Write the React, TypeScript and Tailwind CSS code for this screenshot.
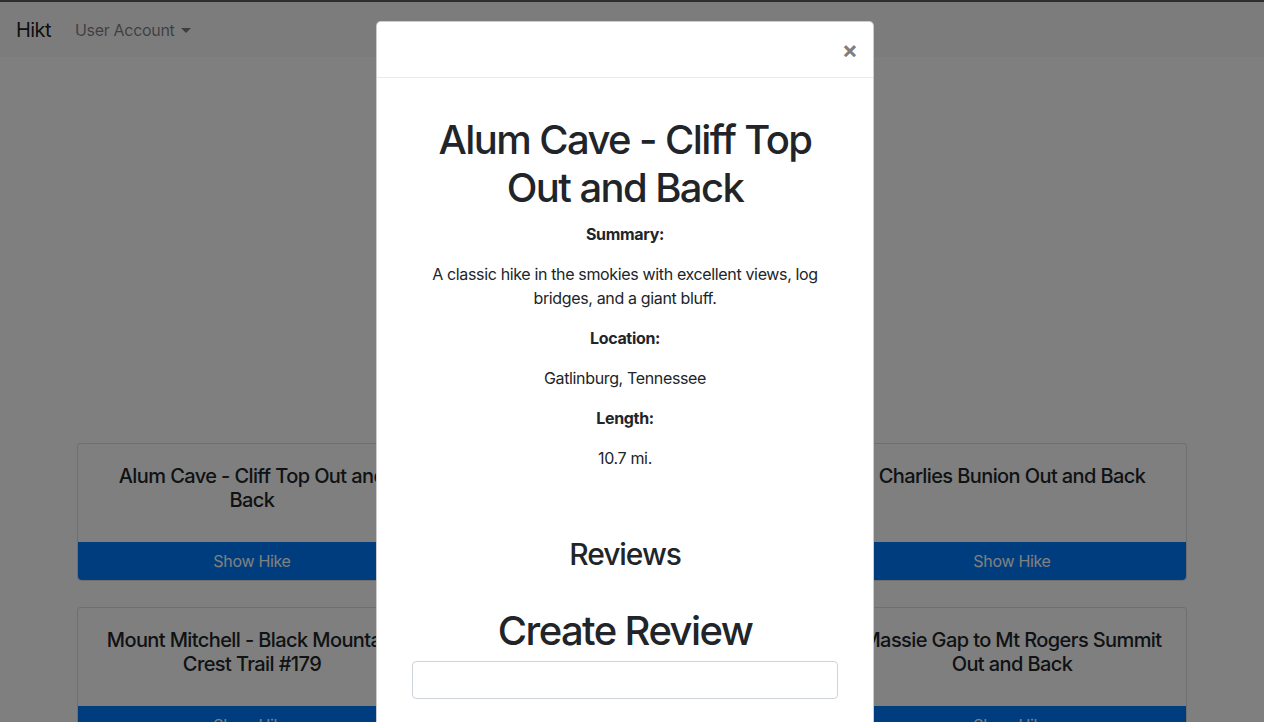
const hikes = [
  { id: 1, name: 'Alum Cave - Cliff Top Out and Back' },
  { id: 2, name: 'Rainbow Falls Trail' },
  { id: 3, name: 'Charlies Bunion Out and Back' },
  { id: 4, name: 'Mount Mitchell - Black Mountain Crest Trail #179' },
  { id: 5, name: 'Max Patch Loop' },
  { id: 6, name: 'Massie Gap to Mt Rogers Summit Out and Back' },
]

function HikeCard({ name }: { name: string }) {
  return (
    <div className="flex h-full flex-col rounded-[4px] border border-black/[0.125] bg-white">
      <div className="flex-1 px-5 pt-5 pb-[18px]">
        <h5 className="mb-3 text-center text-[20px] leading-[24px] font-medium tracking-[-0.03em] text-[#212529]">{name}</h5>
      </div>
      <button className="h-[38px] w-full rounded-b-[4px] bg-[#007bff] text-[16px] tracking-[-0.02em] text-white">Show Hike</button>
    </div>
  )
}

export default function App() {
  return (
    <div
      className="relative h-[722px] w-[1264px] overflow-hidden bg-white text-[#212529]"
      style={{ fontFamily: 'Inter, "Noto Sans", sans-serif' }}
    >
      {/* Navbar */}
      <nav className="flex h-[57px] items-center bg-[#f8f9fa] px-4 pt-[3px]">
        <span className="w-[59px] text-[20px] tracking-[-0.03em] text-black/90">Hikt</span>
        <span className="flex items-center text-[16px] tracking-[-0.02em] text-black/50">
          User Account
          <span className="ml-[7px] h-0 w-0 border-x-[5px] border-t-[5px] border-x-transparent border-t-black/50" />
        </span>
      </nav>

      {/* Page content */}
      <div className="mx-auto w-[1140px] px-[15px] pt-[386px]">
        <div className="grid grid-cols-3 gap-x-[30px] gap-y-[26px]">
          {hikes.map((h) => (
            <HikeCard key={h.id} name={h.name} />
          ))}
        </div>
      </div>

      {/* Backdrop */}
      <div className="absolute inset-0 bg-black/50" />
      <div className="absolute inset-x-0 top-0 h-[2px] bg-[#2e2e2e]" />

      {/* Modal */}
      <div className="absolute top-[21px] left-[376px] w-[498px] rounded-[5px] border border-black/20 bg-white">
        <div className="flex h-[56px] items-center justify-end border-b border-[#e9ecef] px-4">
          <span className="mr-[-1px] text-[24px] leading-none font-bold text-black/50">×</span>
        </div>
        <div className="px-[35px] pt-[38px] text-center">
          <h1 className="mb-[10px] text-[40px] leading-[48px] font-medium tracking-[-0.04em]">Alum Cave - Cliff Top Out and Back</h1>
          <p className="mb-4 text-[16px] leading-[24px] font-bold tracking-[-0.02em]">Summary:</p>
          <p className="mb-4 px-[10px] text-[16px] leading-[24px] tracking-[-0.022em]">
            A classic hike in the smokies with excellent views, log bridges, and a giant bluff.
          </p>
          <p className="mb-4 text-[16px] leading-[24px] font-bold tracking-[-0.02em]">Location:</p>
          <p className="mb-4 text-[16px] leading-[24px] tracking-[-0.022em]">Gatlinburg, Tennessee</p>
          <p className="mb-4 text-[16px] leading-[24px] font-bold tracking-[-0.02em]">Length:</p>
          <p className="mb-4 text-[16px] leading-[24px] tracking-[-0.022em]">10.7 mi.</p>
          <h2 className="mt-[65px] mb-[34px] text-[30px] leading-[38px] font-medium tracking-[-0.035em]">Reviews</h2>
          <h1 className="mb-[6px] text-[40px] leading-[48px] font-medium tracking-[-0.04em]">Create Review</h1>
          <input className="h-[38px] w-full rounded-[4px] border border-[#ced4da] px-3" />
          <div className="h-[60px]" />
        </div>
      </div>
    </div>
  )
}
